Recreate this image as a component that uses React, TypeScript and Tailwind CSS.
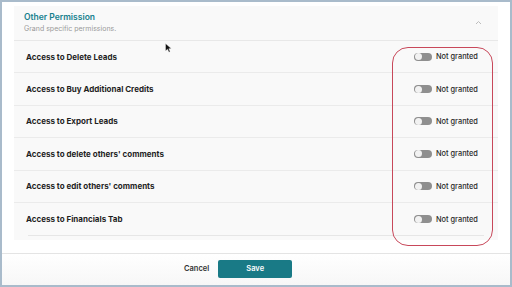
import React from 'react'

const rows = [
  'Access to Delete Leads',
  'Access to Buy Additional Credits',
  'Access to Export Leads',
  "Access to delete others' comments",
  "Access to edit others' comments",
  'Access to Financials Tab',
]

function Toggle() {
  return (
    <div className="flex items-center w-[18px] h-[8px] rounded-full bg-[#8f8f8f] px-[1px]">
      <div className="w-[7px] h-[7px] rounded-full bg-[#f2f2f2]" />
    </div>
  )
}

export default function App() {
  return (
    <div
      className="relative w-[512px] h-[287px] overflow-hidden bg-white border-2 border-[#a9bbcb] flex flex-col"
      style={{ fontFamily: 'Inter, "Open Sans", sans-serif' }}
    >
      {/* Panel */}
      <div className="mx-[12px] mt-[4px] bg-[#f9f9f9] flex flex-col">
        <div className="h-[35px] flex items-center justify-between pl-[10px] pr-[16px] border-b border-[#e8e8e8]">
          <div className="flex flex-col">
            <span className="text-[8.5px] leading-[11px] font-semibold text-[#16808d]">Other Permission</span>
            <span className="text-[7px] leading-[10px] text-[#9a9a9a] mt-[1px]">Grand specific permissions.</span>
          </div>
          <svg width="7" height="5" viewBox="0 0 7 5" className="mt-[-2px]">
            <path d="M1 4 L3.5 1.5 L6 4" stroke="#bdbdbd" strokeWidth="1" fill="none" />
          </svg>
        </div>
        {rows.map((r, i) => (
          <div
            key={r}
            className={
              'h-[32.4px] flex items-center justify-between pl-[12px] pr-[18px] ' +
              (i < rows.length - 1 ? 'border-b border-[#ebebeb]' : '')
            }
          >
            <span className="text-[8px] font-bold text-[#1f1f1f]">{r}</span>
            <div className="flex items-center gap-[4px]">
              <Toggle />
              <span className="text-[7.4px] font-medium text-[#2a2a2a] w-[44px]">Not granted</span>
            </div>
          </div>
        ))}
        <div className="mx-[14px] border-b border-[#e6e6e6]" />
        <div className="h-[4px]" />
      </div>

      <div className="flex-1" />

      {/* Footer */}
      <div className="h-[32px] border-t border-[#e4e4e4] bg-gradient-to-b from-white to-[#f7f7f7] flex items-center gap-[9px] pl-[182px] pb-[2px]">
        <span className="text-[7.5px] font-semibold text-[#333]">Cancel</span>
        <button className="w-[74px] h-[18px] rounded-[2px] bg-[#197a86] text-white text-[7.5px] font-semibold">
          Save
        </button>
      </div>

      {/* Red annotation */}
      <div className="absolute left-[390px] top-[45px] w-[101px] h-[199px] rounded-[16px] border border-[#c8485a] pointer-events-none" />

      {/* Mouse cursor */}
      <svg className="absolute left-[163px] top-[41px]" width="7" height="10" viewBox="0 0 7 10">
        <path d="M0.5 0.5 L0.5 8 L2.5 6.2 L4 9.2 L5.2 8.6 L3.8 5.8 L6.3 5.6 Z" fill="#111" stroke="#fff" strokeWidth="0.4" />
      </svg>
    </div>
  )
}
